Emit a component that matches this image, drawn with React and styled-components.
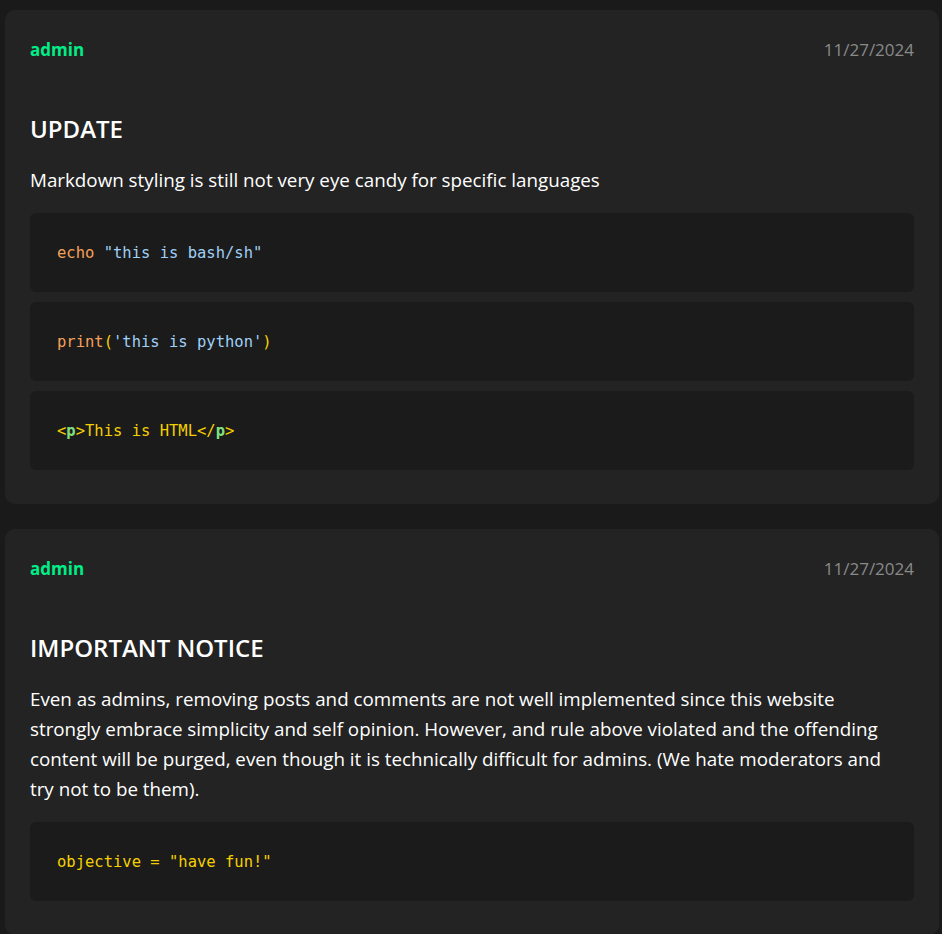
import React from 'react';
import styled, { createGlobalStyle } from 'styled-components';

const Global = createGlobalStyle`
    body {
        margin: 0;
        background: #1a1a1a;
        font-family: "Open Sans", "Noto Sans", sans-serif;
        color: #fff;
    }
`;

const Feed = styled.div`
    display: flex;
    flex-direction: column;
    gap: 25px;
    padding: 10px 3px 0 5px;
`;
const Card = styled.article`
    background: #232323;
    border-radius: 10px;
    padding: 25px 25px 24px;
`;
const Meta = styled.div`
    display: flex;
    justify-content: space-between;
    align-items: center;
    height: 28px;
`;
const Author = styled.span`
    color: #00ee88;
    font-weight: 700;
    font-size: 17px;
`;
const Date = styled.span`
    color: #8a8a8a;
    font-size: 17px;
`;
const Title = styled.h2`
    margin: 50px 0 0;
    font-size: 24px;
    font-weight: 600;
    line-height: 32px;
`;
const Text = styled.p`
    margin: 20px 0 18px;
    font-size: 18.8px;
    line-height: 30px;
`;
const Code = styled.pre`
    margin: 0 0 10px;
    background: #1b1b1b;
    border-radius: 6px;
    padding: 29px 27px 28px;
    font-family: "DejaVu Sans Mono", monospace;
    font-size: 15.5px;
    line-height: 22px;
`;
const Tok = styled.span`
    color: ${p => p.c};
    font-weight: ${p => (p.bold ? 700 : 400)};
`;

const orange = '#f5a05a';
const blue = '#9fd0f7';
const yellow = '#f5cf00';
const green = '#80e080';

const Post = ({ title, lines, code }) => (
    <Card>
        <Meta>
            <Author>admin</Author>
            <Date>11/27/2024</Date>
        </Meta>
        <Title>{title}</Title>
        <Text>
            {lines.map((l, i) => (
                <React.Fragment key={i}>
                    {i > 0 && <br />}
                    {l}
                </React.Fragment>
            ))}
        </Text>
        {code.map((c, i) => <Code key={i}>{c}</Code>)}
    </Card>
);

export default function App() {
    return (
        <>
            <Global />
            <Feed>
                <Post
                    title="UPDATE"
                    lines={['Markdown styling is still not very eye candy for specific languages']}
                    code={[
                        <><Tok c={orange}>echo</Tok> <Tok c={blue}>"this is bash/sh"</Tok></>,
                        <><Tok c={orange}>print</Tok><Tok c={yellow}>(</Tok><Tok c={blue}>'this is python'</Tok><Tok c={yellow}>)</Tok></>,
                        <><Tok c={yellow}>&lt;</Tok><Tok c={green} bold>p</Tok><Tok c={yellow}>&gt;This is HTML&lt;/</Tok><Tok c={green} bold>p</Tok><Tok c={yellow}>&gt;</Tok></>,
                    ]}
                />
                <Post
                    title="IMPORTANT NOTICE"
                    lines={[
                        'Even as admins, removing posts and comments are not well implemented since this website',
                        'strongly embrace simplicity and self opinion. However, and rule above violated and the offending',
                        'content will be purged, even though it is technically difficult for admins. (We hate moderators and',
                        'try not to be them).',
                    ]}
                    code={[<Tok c={yellow}>objective = "have fun!"</Tok>]}
                />
            </Feed>
        </>
    );
}
